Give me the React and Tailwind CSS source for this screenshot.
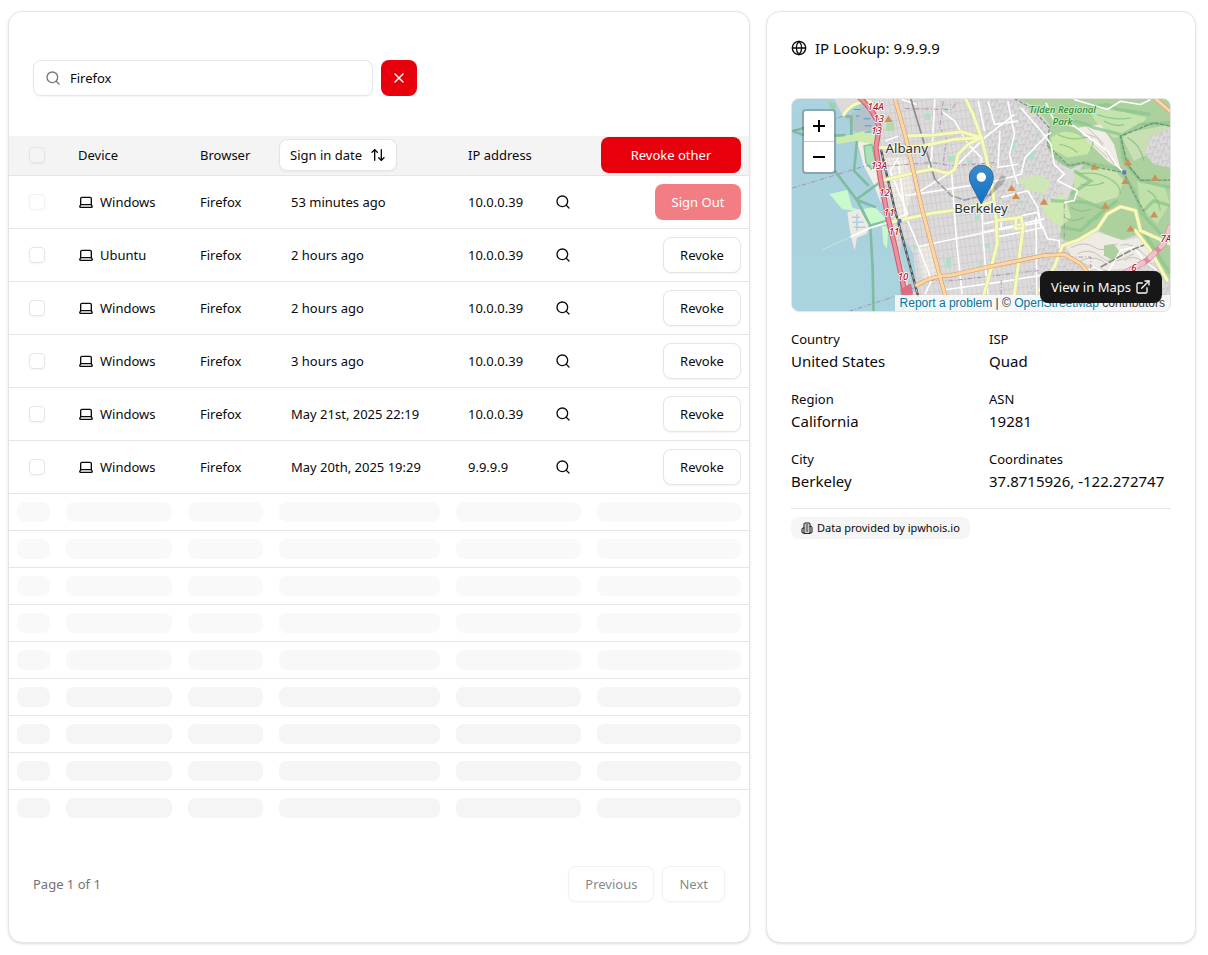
import {
  ArrowUpDown,
  ExternalLink,
  Globe,
  Laptop,
  Search,
  X,
} from "lucide-react";

const sessions = [
  { device: "Windows", browser: "Firefox", date: "53 minutes ago", ip: "10.0.0.39", current: true },
  { device: "Ubuntu", browser: "Firefox", date: "2 hours ago", ip: "10.0.0.39" },
  { device: "Windows", browser: "Firefox", date: "2 hours ago", ip: "10.0.0.39" },
  { device: "Windows", browser: "Firefox", date: "3 hours ago", ip: "10.0.0.39" },
  { device: "Windows", browser: "Firefox", date: "May 21st, 2025 22:19", ip: "10.0.0.39" },
  { device: "Windows", browser: "Firefox", date: "May 20th, 2025 19:29", ip: "9.9.9.9" },
];

const skeletonRows = [
  "bg-[#f9f9f9]",
  "bg-[#f9f9f9]",
  "bg-[#f9f9f9]",
  "bg-[#f9f9f9]",
  "bg-[#f8f8f8]",
  "bg-[#f5f5f5]",
  "bg-[#f5f5f5]",
  "bg-[#f5f5f5]",
  "bg-[#f5f5f5]",
];

const details = [
  ["Country", "United States"],
  ["ISP", "Quad"],
  ["Region", "California"],
  ["ASN", "19281"],
  ["City", "Berkeley"],
  ["Coordinates", "37.8715926, -122.272747"],
];

const outline =
  "inline-flex items-center justify-center rounded-lg border border-neutral-200 bg-white shadow-xs";

function Checkbox({ label, disabled }) {
  return (
    <input
      type="checkbox"
      aria-label={label}
      disabled={disabled}
      className="block size-4 appearance-none rounded border border-neutral-200 shadow-xs disabled:opacity-50"
    />
  );
}

function BuildingIcon() {
  return (
    <svg
      viewBox="0 0 24 24"
      fill="none"
      stroke="currentColor"
      strokeWidth="2"
      strokeLinecap="round"
      strokeLinejoin="round"
      className="size-3"
      aria-hidden="true"
    >
      <path d="M6 22V4a2 2 0 0 1 2-2h8a2 2 0 0 1 2 2v18Z" />
      <path d="M6 12H4a2 2 0 0 0-2 2v6a2 2 0 0 0 2 2h2" />
      <path d="M18 9h2a2 2 0 0 1 2 2v9a2 2 0 0 1-2 2h-2" />
      <path d="M10 6h4M10 10h4M10 14h4M10 18h4" />
    </svg>
  );
}

function SessionTable() {
  return (
    <table className="w-full table-fixed border-collapse text-left">
      <colgroup>
        <col className="w-[49px]" />
        <col className="w-[122px]" />
        <col className="w-[91px]" />
        <col className="w-[177px]" />
        <col className="w-[141px]" />
        <col className="w-[160px]" />
      </colgroup>
      <thead>
        <tr className="h-[39px] border-b border-neutral-200 bg-[#f4f4f4]">
          <th className="pl-5 font-normal">
            <Checkbox label="Select all" />
          </th>
          <th className="pl-5 font-normal">Device</th>
          <th className="pl-5 font-normal">Browser</th>
          <th className="px-2 font-normal">
            <button type="button" className={`${outline} h-8 gap-2 px-2.5`}>
              Sign in date
              <ArrowUpDown className="size-4" />
            </button>
          </th>
          <th className="pl-5 font-normal">IP address</th>
          <th className="px-2 font-normal">
            <button
              type="button"
              className="ml-auto flex h-9 w-[140px] items-center justify-center rounded-lg bg-[#e7000b] text-white"
            >
              Revoke other
            </button>
          </th>
        </tr>
      </thead>
      <tbody>
        {sessions.map((s, i) => (
          <tr key={i} className="h-[53px] border-b border-neutral-200">
            <td className="pl-5">
              <Checkbox label={`Select session ${i + 1}`} disabled={s.current} />
            </td>
            <td className="pl-5">
              <div className="flex items-center gap-1.5">
                <Laptop className="size-4" />
                {s.device}
              </div>
            </td>
            <td className="pl-5">{s.browser}</td>
            <td className="pl-5">{s.date}</td>
            <td className="pr-2 pl-5">
              <div className="flex items-center justify-between">
                {s.ip}
                <button
                  type="button"
                  aria-label={`Look up ${s.ip}`}
                  className="flex size-9 items-center justify-center rounded-lg"
                >
                  <Search className="size-4" />
                </button>
              </div>
            </td>
            <td className="px-2">
              <div className="flex justify-end">
                {s.current ? (
                  <button
                    type="button"
                    disabled
                    className="h-9 w-[86px] rounded-lg bg-[#e7000b] text-white opacity-50"
                  >
                    Sign Out
                  </button>
                ) : (
                  <button type="button" className={`${outline} h-9 w-[78px]`}>
                    Revoke
                  </button>
                )}
              </div>
            </td>
          </tr>
        ))}
        {skeletonRows.map((tone, i) => (
          <tr key={i} className="border-b border-neutral-200 last:border-b-0">
            {[0, 1, 2, 3, 4, 5].map((c) => (
              <td key={c} className="p-2">
                <div className={`h-5 rounded-lg ${tone}`} />
              </td>
            ))}
          </tr>
        ))}
      </tbody>
    </table>
  );
}

const peaks = [
  [300, 74], [671, 282], [684, 306], [769, 323], [921, 218], [1022, 204],
  [1014, 261], [1104, 251], [954, 335], [1101, 362], [1030, 404],
];

const parks = [
  [410, 58, 16, 18], [478, 186, 22, 16], [415, 200, 12, 12], [540, 195, 12, 14],
  [474, 490, 14, 34], [590, 450, 14, 12], [574, 500, 8, 20], [668, 140, 14, 26],
  [722, 172, 16, 22], [564, 365, 10, 14], [375, 455, 14, 10], [640, 350, 14, 12],
  [748, 110, 12, 10], [520, 120, 12, 12], [470, 40, 8, 16], [690, 320, 14, 8],
];

const shields = [
  [237, 47, "14A"], [255, 83, "13"], [248, 119, "13"], [247, 224, "13A"], [272, 307, "12"],
  [286, 366, "11"], [301, 424, "11"], [328, 558, "10"], [1032, 531, "6"], [1120, 446, "7A"],
];

function MapArt() {
  return (
    <svg
      viewBox="9 12 1140 642"
      preserveAspectRatio="xMidYMid slice"
      className="block h-full w-full"
      role="img"
      aria-label="Map of Berkeley"
    >
      <defs>
        <pattern id="blocks" width="14" height="24" patternUnits="userSpaceOnUse" patternTransform="rotate(-8)">
          <path d="M0 0H14M0 0V24" stroke="#bdbbbb" strokeWidth="2" fill="none" />
        </pattern>
        <pattern id="lanes" width="26" height="22" patternUnits="userSpaceOnUse" patternTransform="rotate(24)">
          <path d="M0 5Q8 -2 14 7T26 5M8 0Q2 12 10 22M21 7V20" stroke="#bdbbbb" strokeWidth="2" fill="none" />
        </pattern>
        <pattern id="downtown" width="12" height="16" patternUnits="userSpaceOnUse" patternTransform="rotate(-8)">
          <rect width="12" height="16" fill="#eeeae4" />
          <path d="M0 0H12M0 0V16" stroke="#c9c5c0" strokeWidth="2" />
        </pattern>
        <linearGradient id="pin" x1="0" y1="0" x2="0" y2="1">
          <stop offset="0" stopColor="#3b8dca" />
          <stop offset="1" stopColor="#126fc6" />
        </linearGradient>
      </defs>

      <rect x="0" y="0" width="1170" height="670" fill="#dcdadb" />
      <rect x="230" y="0" width="600" height="670" fill="url(#blocks)" />
      <path d="M590 0H700L790 120L830 260L760 380H640L600 200Z" fill="#dcdadb" />
      <path d="M590 0H700L790 120L830 260L760 380H640L600 200Z" fill="url(#lanes)" />
      <path d="M760 430H1170V670H700Z" fill="#dcdadb" />
      <path d="M760 430H1170V670H700Z" fill="url(#lanes)" />
      <path d="M290 190L355 190L375 280L350 370L320 370Z" fill="url(#downtown)" />
      <path d="M388 460L432 450L450 545L405 570Z" fill="url(#downtown)" />

      <path d="M0 0H130L160 50L235 20L262 100L240 170L262 260L300 400L345 600L360 670H0Z" fill="#aad3df" />
      <path d="M340 420L375 480L388 600L365 590L335 480Z" fill="#aad3df" />
      <path d="M130 0H235L240 22L190 30L160 60Z" fill="#dcdadb" />
      <path d="M118 20L140 28V45L125 42Z" fill="#9fd0a6" />
      <path d="M170 70L245 22L262 100L210 125Z" fill="#b3c4c8" />
      <path d="M142 130L190 120L230 108L262 115L260 160L225 145L200 140L145 150Z" fill="#cdebb0" />
      <path d="M205 140Q225 145 258 150L262 230L278 330L255 270L225 215Z" fill="#f2efe9" />
      <path d="M226 155L250 150L262 210L248 225L232 205Z" fill="#aee0b8" stroke="#82c39a" strokeWidth="4" />
      <path d="M122 300L176 288L190 340L215 350L245 395L218 392L195 350L160 345Z" fill="#c8facc" />
      <path d="M176 355L215 345L240 400L235 420L205 432L198 470L190 440L182 400Z" fill="#eee9e3" />
      <path d="M190 370H215M192 385H225M196 400H232M205 360V410" stroke="#aad3df" strokeWidth="5" />
      <path d="M272 268L288 300L297 340L286 330Z" fill="#c8facc" />
      <path d="M225 345L258 338L290 372L295 385L262 390L245 395Z" fill="#c8facc" />
      <path d="M280 395L300 400L295 465L285 450Z" fill="#c8facc" />

      <g fill="none" stroke="#79b996" strokeWidth="8" opacity="0.85">
        <path d="M10 110L60 128L170 122M10 110L50 100M170 66H188V122M138 230L205 318L262 340M205 315L270 268M205 140L196 230L240 275" />
        <path d="M205 318L245 395L252 520L255 654M245 395L300 380" />
        <path d="M300 400L335 520L345 654" />
      </g>
      <path d="M185 430L245 402L300 385" stroke="#fff" strokeWidth="6" fill="none" />
      <path d="M100 468L185 430" stroke="#c9e3dd" strokeWidth="3" />
      <path d="M195 45H215M202 65H212M225 73H245M228 94H248M228 113H248" stroke="#4a9be0" strokeWidth="3" />

      <path d="M680 10L740 35L785 90L780 150L800 190L850 225L890 205L860 260L840 320L815 430L850 450L900 430L930 410L1000 440L1060 420L1110 500L1149 560V0H680Z" fill="#add19e" />
      <path d="M790 130Q830 100 870 120L920 150L900 180L840 190L795 165Z" fill="#c9e8a8" />
      <path d="M900 40L1000 50L1080 70L1040 115L980 130L930 90Z" fill="#c5e3ae" />
      <path d="M870 100L940 90L980 150L1000 225L960 200L900 140Z" fill="#f0ece6" />
      <path d="M1000 120L1070 105L1149 90V190L1100 170L1040 200Z" fill="#c7dfb2" />
      <path d="M1085 130L1149 100V220L1100 210L1075 180Z" fill="#dcdadb" />
      <path d="M1085 130L1149 100V220L1100 210L1075 180Z" fill="url(#lanes)" />
      <path d="M860 230L970 215L1010 260L990 310L920 330L860 300Z" fill="#c8e4af" />
      <path d="M1050 260L1130 270L1149 330L1110 390L1060 340Z" fill="#bfe0a8" />
      <path d="M790 320L830 300L850 370L820 400L780 370L760 340Z" fill="#cdebb0" />
      <path d="M690 255L750 240L790 260L775 300L720 290Z" fill="#cdebb0" opacity="0.8" />
      <path d="M830 450L930 415L1010 440L1060 430L1110 500L1060 520L960 530L860 500Z" fill="#eeeae4" />
      <path d="M950 455L980 450L1000 480L975 500L950 485Z" fill="#add19e" />
      <g fill="none" stroke="#c8c1ba" strokeWidth="3">
        <path d="M850 462Q890 440 920 460T990 450M870 480Q910 460 940 490T1040 480M880 500Q930 480 960 515M1000 455Q1030 440 1080 490M1010 500Q1040 480 1070 505" />
        <path d="M870 110L930 130L980 210M900 100L950 150M890 125L960 190" />
      </g>
      <g fill="none" stroke="#8cc58c" strokeWidth="10" opacity="0.75">
        <path d="M780 140Q790 190 840 215L890 205L1000 225L1040 290L1065 360L1149 450" />
        <path d="M1149 85L1060 90L1000 125L1010 200L1060 260L1149 280M790 320L900 325L950 345L930 370L900 385M820 400L880 410L935 360L990 320M860 230L910 260L850 300" />
        <path d="M900 40L960 30L990 45L1090 60M800 80Q860 70 920 100L1000 120" />
        <path d="M1070 350L1100 320L1149 335M1060 400L1149 540" />
      </g>
      <g fill="none" stroke="#7cbd85" strokeWidth="4" opacity="0.7">
        <path d="M810 120Q850 140 890 130T910 165M815 150Q850 155 870 175M870 240Q920 230 960 250T1000 300M880 270Q920 280 950 265M1020 130Q1060 150 1070 200M1080 290Q1110 300 1120 350M930 60Q980 80 1030 70M950 80Q990 100 1010 90M850 340Q880 360 910 345M830 370Q860 390 890 370" />
      </g>
      <path d="M680 12L730 40L785 100L780 155L845 215L890 205L920 218L1010 235L1035 290L1075 360" fill="none" stroke="#7f9a80" strokeWidth="4" strokeDasharray="12 4" />
      <path d="M1149 95L1100 85L1000 125L1020 210L1060 258H1149" fill="none" stroke="#6f9273" strokeWidth="4" strokeDasharray="14 3" />

      <g fill="#aee0c8">
        {parks.map(([x, y, w, h]) => (
          <rect key={`${x}-${y}`} x={x} y={y} width={w} height={h} rx="3" />
        ))}
      </g>
      <rect x="293" y="84" width="24" height="26" fill="#b5dba5" />

      <g fill="none" stroke="#fff" strokeWidth="5" strokeLinejoin="round">
        <path d="M440 12L430 190L420 225M385 30L340 15M460 50L500 80L540 150L580 190M330 125L290 140M380 300L480 240L590 130L680 60" />
        <path d="M350 305L480 285L620 262L700 240L712 190L780 120L790 115M390 458L620 410L760 385M490 230L505 440L522 602M330 200L350 360L390 458L430 560L410 602" />
        <path d="M580 190L584 420L600 602M636 110L630 220L690 210M600 20L620 90L690 80M570 18L590 110M330 190L305 230L358 360L320 375" />
        <path d="M660 20L680 120L665 180L680 240L690 270M700 40L760 110L790 150L800 210L830 240L810 260L870 290L860 320L830 325M640 310L720 290L750 340L760 390L780 435L815 440L818 480" />
        <path d="M585 390L750 355M585 415L770 375M625 430L770 400M750 355L760 400M745 370L747 602M460 590L640 565L760 545M640 350L640 400" />
        <path d="M775 25L800 80L860 95L920 140L960 170L990 215L1010 235M860 15L960 45L1000 20L1060 30L1090 15M870 550L920 520L960 540L1000 470L1040 460L1070 500L1110 530" />
      </g>

      <g fill="none" stroke="#8a8a8a" strokeWidth="5">
        <path d="M367 12L440 255" />
        <path d="M440 255L490 305L530 318L570 308L620 300" strokeDasharray="22 5" opacity="0.7" />
        <path d="M276 160L320 350L390 610" stroke="#555" strokeWidth="7" />
        <path d="M276 160L320 350L390 610" stroke="#bbb" strokeWidth="3" strokeDasharray="12 10" />
        <path d="M940 520L1030 470L1080 450" strokeDasharray="22 5" />
      </g>
      <g fill="none" stroke="#a37fa3" strokeWidth="3" strokeDasharray="14 6 3 6" opacity="0.8">
        <path d="M10 282L230 215L300 215L430 205L490 215L620 205" />
        <path d="M10 110L180 60M350 42L490 45L510 18M465 20L455 100L475 130L465 210M180 654L345 600L420 560L500 560L760 530M640 560V602M830 330V490L910 490V530" />
      </g>

      <g fill="none" strokeLinejoin="round" strokeLinecap="round">
        <g stroke="#d8d98a" strokeWidth="12">
          <path d="M165 60Q190 20 245 20M350 125L440 122L520 112L580 130M270 160L400 155L500 135L580 130M285 258L380 235L430 225L480 238L500 225L510 180L540 150L580 130M532 12L555 60L580 130L595 190L612 270L625 380L628 450L600 560L588 602M305 385L430 358L500 348L612 325" />
          <path d="M625 380L700 370L706 400L680 602M685 372L683 405L706 400M825 455L870 440L930 405L960 360L1000 338L1045 350L1060 410L1149 450M825 455L800 520L755 590M1045 410L1090 470L1140 560" />
        </g>
        <g stroke="#f6fabf" strokeWidth="9">
          <path d="M165 60Q190 20 245 20M350 125L440 122L520 112L580 130M270 160L400 155L500 135L580 130M285 258L380 235L430 225L480 238L500 225L510 180L540 150L580 130M532 12L555 60L580 130L595 190L612 270L625 380L628 450L600 560L588 602M305 385L430 358L500 348L612 325" />
          <path d="M625 380L700 370L706 400L680 602M685 372L683 405L706 400M825 455L870 440L930 405L960 360L1000 338L1045 350L1060 410L1149 450M825 455L800 520L755 590M1045 410L1090 470L1140 560" />
        </g>
        <path d="M318 8L350 120L400 340L450 530L472 610M385 575Q430 545 490 545L600 520L770 485L830 482L880 510L920 560M1100 8L1149 50" stroke="#d9a36b" strokeWidth="13" />
        <path d="M318 8L350 120L400 340L450 530L472 610M385 575Q430 545 490 545L600 520L770 485L830 482L880 510L920 560M1100 8L1149 50" stroke="#fcd6a4" strokeWidth="9" />
        <path d="M215 12Q260 50 272 100L262 160L275 250L298 370L320 460L350 600" stroke="#d3566e" strokeWidth="16" />
        <path d="M215 12Q260 50 272 100L262 160L275 250L298 370L320 460L350 600" stroke="#e892a2" strokeWidth="10" />
        <path d="M340 590L365 575L370 600L345 602Z" fill="#dd6b82" stroke="#dd6b82" strokeWidth="8" />
        <path d="M1149 400L1130 450L1080 500L1000 545" stroke="#e08c9f" strokeWidth="18" />
        <path d="M1149 400L1130 450L1080 500L1000 545" stroke="#efc3cb" strokeWidth="14" strokeDasharray="20 26" />
      </g>

      <g fill="#d08f55">
        {peaks.map(([x, y]) => (
          <path key={`${x}-${y}`} d={`M${x} ${y - 11}L${x + 12} ${y + 9}H${x - 12}Z`} />
        ))}
      </g>
      <path d="M327 375h12v12h-12zM1005 228h12v12h-12z" fill="#5b7cb8" />

      <g fontFamily="'Noto Sans', sans-serif" paintOrder="stroke" strokeLinejoin="round">
        <g fontSize="29" fontStyle="italic" fontWeight="500" fill="#a8182c" stroke="#fff" strokeWidth="5">
          {shields.map(([x, y, label]) => (
            <text key={`${x}-${y}`} x={x} y={y}>{label}</text>
          ))}
        </g>
        <g fontSize="29" fontStyle="italic" fontWeight="500" fill="#1d8a2f" stroke="#d3ebc5" strokeWidth="5" textAnchor="middle">
          <text x="825" y="57">Tilden Regional</text>
          <text x="825" y="92">Park</text>
        </g>
        <g fontSize="40" fill="#333" stroke="#ffffffbb" strokeWidth="6" textAnchor="middle">
          <text x="355" y="176">Albany</text>
          <text x="579" y="357">Berkeley</text>
        </g>
      </g>

      <path d="M585 325L640 245Q665 240 645 270Z" fill="#000" opacity="0.2" />
      <path
        d="M580 213C560 213 544 229 544 249C544 265 551 274 558 288L580 330L602 288C609 274 616 265 616 249C616 229 600 213 580 213Z"
        fill="url(#pin)"
        stroke="#2e6c97"
        strokeWidth="3"
      />
      <circle cx="580" cy="249" r="14" fill="#fff" />
    </svg>
  );
}

function MapView() {
  return (
    <div className="relative h-[214px] overflow-hidden rounded-lg border border-neutral-200 font-['Liberation_Sans',sans-serif]">
      <MapArt />
      <div className="absolute top-2.5 left-2.5 flex w-[34px] flex-col overflow-hidden rounded border-2 border-black/20 bg-white bg-clip-padding">
        <button type="button" aria-label="Zoom in" className="flex h-[31px] items-center justify-center border-b border-[#ccc]">
          <svg viewBox="0 0 12 12" className="size-3" aria-hidden="true">
            <path d="M6 0V12M0 6H12" stroke="#000" strokeWidth="2" />
          </svg>
        </button>
        <button type="button" aria-label="Zoom out" className="flex h-[30px] items-center justify-center">
          <svg viewBox="0 0 12 12" className="size-3" aria-hidden="true">
            <path d="M0 6H12" stroke="#000" strokeWidth="2" />
          </svg>
        </button>
      </div>
      <div className="absolute right-0 bottom-0 bg-white/80 px-[5px] text-xs leading-4 whitespace-nowrap text-[#333]">
        <a href="#report" className="text-[#0078a8]">Report a problem</a>
        {" | © "}
        <a href="#osm" className="text-[#0078a8]">OpenStreetMap</a>
        {" contributors"}
      </div>
      <a
        href="#maps"
        className="absolute right-2 bottom-2 flex h-8 w-[122px] items-center justify-center gap-1 rounded-lg bg-neutral-900 font-['Noto_Sans',sans-serif] text-[13px] whitespace-nowrap text-neutral-50"
      >
        View in Maps
        <ExternalLink className="size-4" />
      </a>
    </div>
  );
}

const card = "rounded-[14px] border border-neutral-200 bg-white shadow-sm";

export default function App() {
  return (
    <main className="grid grid-cols-[742fr_430fr] gap-4 bg-white pt-[11px] pr-3 pb-3 pl-2 font-['Noto_Sans',sans-serif] text-[13px] leading-5 text-neutral-950">
      <section className={card}>
        <div className="flex gap-2 px-6 pt-12 pb-10">
          <label className="flex h-9 w-[340px] items-center gap-[9px] rounded-lg border border-neutral-200 px-[11px] shadow-xs">
            <Search className="size-4 shrink-0 text-neutral-500" />
            <input
              type="text"
              aria-label="Search sessions"
              defaultValue="Firefox"
              className="w-full min-w-0 bg-transparent outline-none"
            />
          </label>
          <button
            type="button"
            aria-label="Clear search"
            className="flex size-9 items-center justify-center rounded-lg bg-[#e7000b] text-white"
          >
            <X className="size-4" />
          </button>
        </div>
        <SessionTable />
        <div className="flex items-center justify-between px-6 py-10">
          <p className="text-neutral-500">Page 1 of 1</p>
          <div className="flex gap-2">
            <button type="button" disabled className={`${outline} h-9 px-4 opacity-50`}>
              Previous
            </button>
            <button type="button" disabled className={`${outline} h-9 px-4 opacity-50`}>
              Next
            </button>
          </div>
        </div>
      </section>

      <section className={`${card} p-6`}>
        <h2 className="mb-[38px] flex items-center gap-2 text-[15px] leading-6">
          <Globe className="size-4" />
          IP Lookup: 9.9.9.9
        </h2>
        <MapView />
        <dl className="mt-[17px] grid grid-cols-2 gap-4">
          {details.map(([label, value]) => (
            <div key={label}>
              <dt>{label}</dt>
              <dd className="text-[15px] leading-6 whitespace-nowrap">{value}</dd>
            </div>
          ))}
        </dl>
        <div className="mt-[15px] border-t border-neutral-200 pt-2">
          <span className="inline-flex h-[22px] items-center gap-1 rounded-lg bg-neutral-100 px-2.5 text-[11px] leading-4">
            <BuildingIcon />
            Data provided by ipwhois.io
          </span>
        </div>
      </section>
    </main>
  );
}
